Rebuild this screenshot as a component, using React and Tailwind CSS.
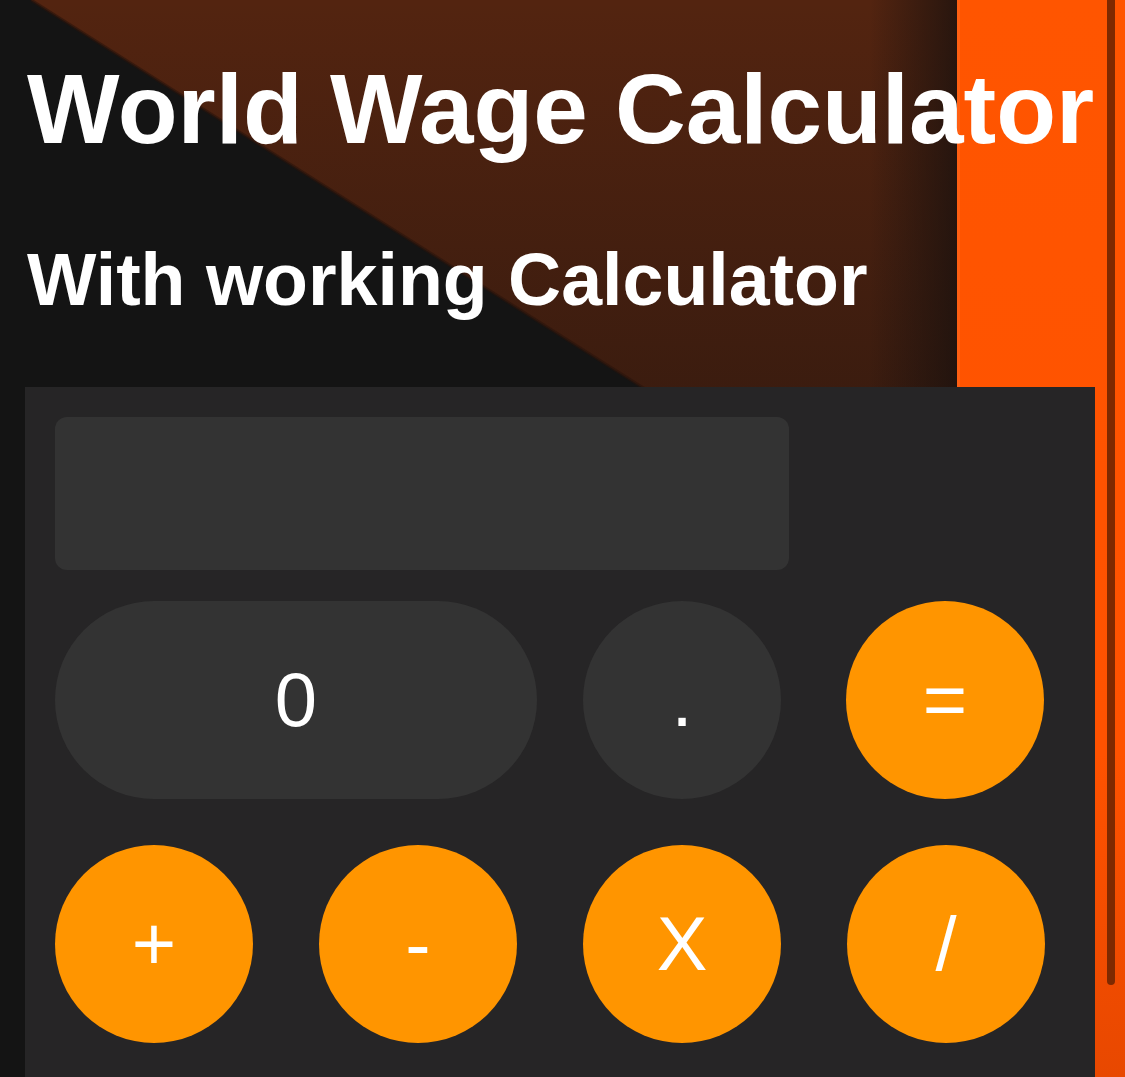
import React from 'react';

const dark = 'bg-[#333333]';
const orange = 'bg-[#ff9500]';

function Key({ label, color, wide }) {
  return (
    <button
      className={`flex h-[198px] ${wide ? 'w-[482px]' : 'w-[198px]'} shrink-0 items-center justify-center rounded-full ${color} text-[76px] font-normal text-white`}
    >
      {label}
    </button>
  );
}

function Backdrop() {
  return (
    <svg className="absolute inset-0" width="1125" height="1077" viewBox="0 0 1125 1077">
      <defs>
        <linearGradient id="shade" x1="0" y1="0" x2="1" y2="0">
          <stop offset="0" stopColor="#1a110e" stopOpacity="0" />
          <stop offset="1" stopColor="#1a110e" stopOpacity="0.75" />
        </linearGradient>
        <linearGradient id="fade" x1="0" y1="0" x2="0" y2="1">
          <stop offset="0" stopColor="#1a110e" stopOpacity="0" />
          <stop offset="1" stopColor="#1a110e" stopOpacity="0.45" />
        </linearGradient>
        <linearGradient id="band" x1="0" y1="0" x2="0" y2="1">
          <stop offset="0" stopColor="#ff5500" />
          <stop offset="0.7" stopColor="#ff5200" />
          <stop offset="1" stopColor="#e84800" />
        </linearGradient>
      </defs>
      <rect width="1125" height="1077" fill="#141414" />
      <polygon points="31,0 957,0 957,420 694,420" fill="#532410" />
      <polygon points="31,0 957,0 957,420 694,420" fill="url(#fade)" />
      <line x1="31" y1="0" x2="694" y2="420" stroke="#2a140c" strokeOpacity="0.6" strokeWidth="3" />
      <rect x="870" y="0" width="87" height="420" fill="url(#shade)" />
      <rect x="957" y="0" width="168" height="1077" fill="url(#band)" />
      <rect x="957" y="0" width="3" height="1077" fill="#ff7a3a" fillOpacity="0.3" />
      <rect x="1107" y="-10" width="8" height="995" rx="4" fill="#7e2900" />
    </svg>
  );
}

export default function App() {
  return (
    <div className="relative h-[1077px] w-full overflow-hidden bg-[#141414] font-['Liberation_Sans',Arial,sans-serif]">
      <Backdrop />
      <div className="relative flex h-full flex-col pl-[25px] pr-[30px]">
        <h1 className="mt-[60px] whitespace-nowrap pl-[2px] text-[98px] font-bold leading-[98px] text-white">
          World Wage Calculator
        </h1>
        <h2 className="mt-[85px] whitespace-nowrap pl-[2px] text-[73.5px] font-bold leading-[73.5px] text-white">
          With working Calculator
        </h2>
        <div className="mt-[70px] flex-1 bg-[#262526] px-[30px] pt-[30px]">
          <div className={`h-[153px] w-[734px] rounded-[12px] ${dark}`} />
          <div className="mt-[31px] flex">
            <Key label="0" color={dark} wide />
            <div className="ml-[46px]">
              <Key label="." color={dark} />
            </div>
            <div className="ml-[65px]">
              <Key label="=" color={orange} />
            </div>
          </div>
          <div className="mt-[46px] flex gap-[66px]">
            <Key label="+" color={orange} />
            <Key label="-" color={orange} />
            <Key label="X" color={orange} />
            <Key label="/" color={orange} />
          </div>
        </div>
      </div>
    </div>
  );
}
